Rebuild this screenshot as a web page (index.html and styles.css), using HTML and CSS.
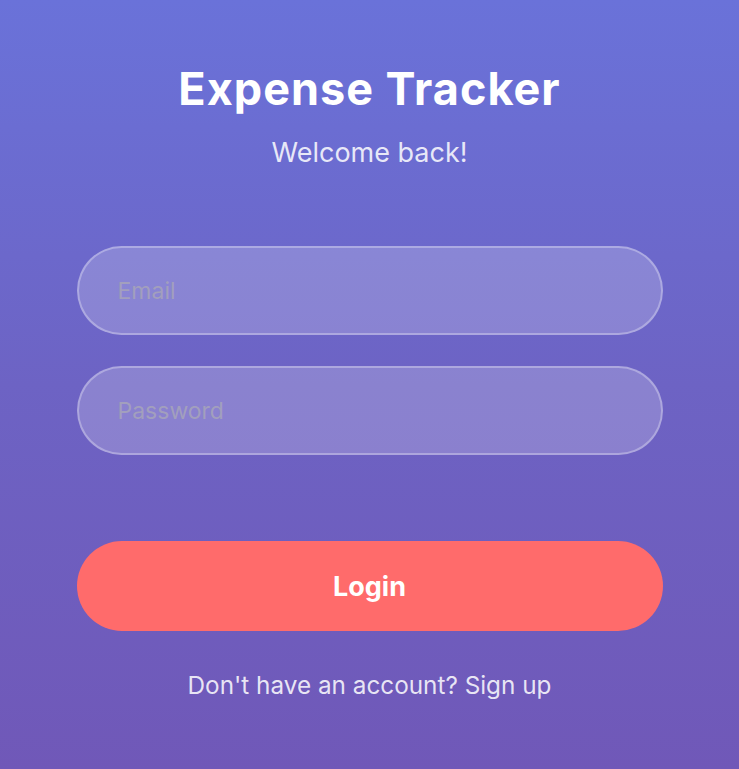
FILE: index.html
```html
<!DOCTYPE html>
<html lang="en">
<head>
<meta charset="utf-8">
<title>Expense Tracker</title>
<link rel="stylesheet" href="styles.css">
</head>
<body>
<main class="screen">
  <header class="head">
    <h1 class="title">Expense Tracker</h1>
    <p class="subtitle">Welcome back!</p>
  </header>
  <form class="form">
    <input class="field" type="email" placeholder="Email">
    <input class="field" type="password" placeholder="Password">
    <button class="login" type="button">Login</button>
  </form>
  <p class="footer">Don't have an account? Sign up</p>
</main>
</body>
</html>
```
FILE: styles.css
```css
html, body {
  margin: 0;
  padding: 0;
}
body {
  min-height: 100vh;
  background: linear-gradient(180deg, #6a72d9 0%, #6d63c4 50%, #7058b8 100%);
  font-family: Inter, "Noto Sans", "Liberation Sans", sans-serif;
  color: #fff;
}
.screen {
  width: 586px;
  margin: 0 auto;
  padding-top: 62px;
  display: flex;
  flex-direction: column;
  align-items: stretch;
}
.head {
  display: flex;
  flex-direction: column;
  align-items: center;
}
.title {
  margin: 0;
  font-size: 45px;
  line-height: 54px;
  font-weight: 700;
  letter-spacing: 1px;
}
.subtitle {
  margin: 21px 0 0;
  font-size: 27px;
  line-height: 32px;
  font-weight: 400;
  color: rgba(255, 255, 255, 0.85);
}
.form {
  margin-top: 77px;
  display: flex;
  flex-direction: column;
}
.field {
  box-sizing: border-box;
  height: 89px;
  margin: 0 0 31px;
  padding: 0 39px;
  border: 2px solid rgba(255, 255, 255, 0.3);
  border-radius: 45px;
  background: rgba(255, 255, 255, 0.2);
  font-family: inherit;
  font-size: 23px;
  color: #fff;
  outline: none;
}
.field:last-of-type {
  margin-bottom: 0;
}
.field::placeholder {
  color: #a29fbd;
}
.login {
  margin-top: 86px;
  height: 90px;
  border: none;
  border-radius: 45px;
  background: #ff6b6b;
  color: #fff;
  font-family: inherit;
  font-size: 27px;
  font-weight: 700;
}
.footer {
  margin: 40px 0 0;
  text-align: center;
  font-size: 24.3px;
  line-height: 29px;
  color: rgba(255, 255, 255, 0.85);
}
```
